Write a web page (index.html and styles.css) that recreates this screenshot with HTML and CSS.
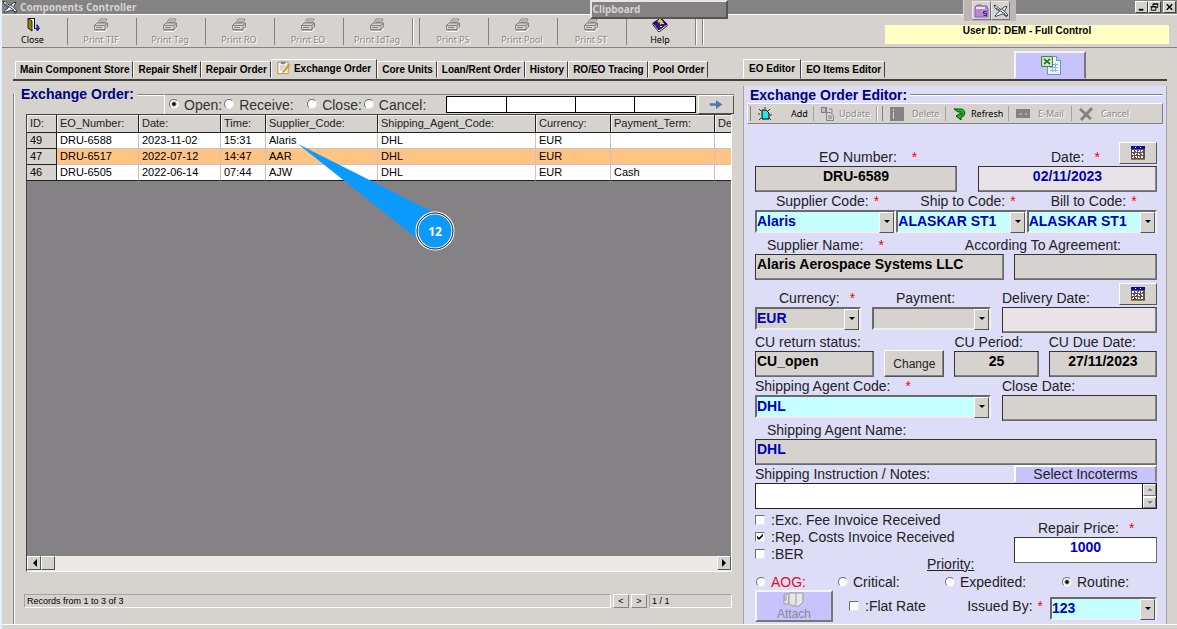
FILE: index.html
```html
<!DOCTYPE html>
<html lang="en">
<head>
<meta charset="utf-8">
<title>Components Controller</title>
<link rel="stylesheet" href="styles.css">
</head>
<body>
<svg class="defs" aria-hidden="true">
  <symbol id="i-printer" viewBox="0 0 16 14">
    <path d="M5 5 7 1h7l-2 4" fill="#e8e6e2" stroke="#848284"/>
    <path d="M7 3h5M6.500 4.500h5" stroke="#848284"/>
    <path d="M1.500 7.500 4 5h10.500l-2.500 2.500zM1.500 7.500h10.500v4H1.500zM12 7.500l2.500-2.500v4l-2.500 2.500M3 11.500v1.500h8l1-1.500" fill="#d6d3ce" stroke="#848284"/>
    <path d="M3 9.500h6" stroke="#848284"/><path d="M2 13.500h10l3-3.500" fill="none" stroke="#fff"/>
  </symbol>
  <symbol id="i-plane" viewBox="0 0 16 14">
    <path d="M1 1.500h2l3 3 2 1 4-3h2l-2.500 4.500 3 3.500v1.500l-5-2-7 2.500v-1.500l4-3.500-4-3z" fill="#eef2f6" stroke="#222" stroke-width=".8"/>
    <path d="M3 4l9 6M9 5.500l2 1M11 11l3 2" stroke="#3a4a6a" stroke-width="1"/>
  </symbol>
  <symbol id="i-calendar" viewBox="0 0 14 14">
    <path d="M0 0h14v14H0z" fill="#555"/>
    <path d="M0 0h14v3H0z" fill="#0808b8"/><path d="M4 1h1v1H4zM9 1h1v1H9z" fill="#fff"/>
    <path d="M1 4h2v2H1zM4 4h2v2H4zM7 4h2v2H7zM10 4h2v2h-2zM1 7h2v2H1zM4 7h2v2H4zM7 7h2v2H7zM10 7h2v2h-2zM1 10h2v2H1zM4 10h2v2H4zM7 10h2v2H7zM10 10h2v2h-2z" fill="#fff"/>
    <path d="M4 5h1v1H4zM7 4h1v1H7zM11 5h1v1h-1zM2 7h1v1H2zM5 8h1v1H5zM8 7h1v1H8zM10 8h1v1h-1zM1 10h1v1H1zM4 11h1v1H4zM8 10h1v1H8z" fill="#e02020"/>
    <path d="M0 13h14v1H0z" fill="#8a8430"/>
  </symbol>
</svg>

<header class="titlebar">
  <svg class="app-icon"><use href="#i-plane"/></svg>
  <h1>Components Controller</h1>
  <div class="window-buttons">
    <button type="button" aria-label="Minimize"><svg viewBox="0 0 12 10"><path d="M3 8h5" stroke="#000" stroke-width="2"/></svg></button>
    <button type="button" aria-label="Restore"><svg viewBox="0 0 12 10"><path d="M4.500 4V1.500h5v4H8M4 2h6M2.500 4.500h5v4h-5zM2 5h6" fill="none" stroke="#000"/></svg></button>
    <button type="button" aria-label="Close window" class="apart"><svg viewBox="0 0 12 10"><path d="M3 2l6 6M9 2 3 8" stroke="#000" stroke-width="1.500"/></svg></button>
  </div>
</header>
<div class="clipboard-window">Clipboard</div>
<div class="float-tools">
  <button type="button" aria-label="Folder"><svg viewBox="0 0 16 14"><path d="M1 3 3 1h4l1 1h5v2h1v9H1z" fill="#b48ad0" stroke="#8a60b0"/><path d="M2 4h9" stroke="#f0e0fa" stroke-width="2"/><path d="M12.500 7.500h-3v2h3v2h-3" fill="none" stroke="#302090"/></svg></button>
  <button type="button" aria-label="Plane"><svg><use href="#i-plane"/></svg></button>
</div>

<div class="toolbar">
  <nav class="tools">
    <button type="button" class="first"><svg viewBox="0 0 16 14"><path d="M3.500 11V.5h6V11" fill="#fff" stroke="#000"/><path d="M3 0l4 3v10L3 10z" fill="#8a8a00" stroke="#222"/><path d="M11 7c3 0 3 2 2 4M10.500 10l2 3 2-3z" fill="#2020b0" stroke="#2020b0"/></svg>Close</button>
    <button type="button" disabled><svg><use href="#i-printer"/></svg>Print TIF</button>
    <button type="button" disabled><svg><use href="#i-printer"/></svg>Print Tag</button>
    <button type="button" disabled><svg><use href="#i-printer"/></svg>Print RO</button>
    <button type="button" disabled><svg><use href="#i-printer"/></svg>Print EO</button>
    <button type="button" disabled><svg><use href="#i-printer"/></svg>Print IdTag</button>
    <span class="gap"></span>
    <button type="button" disabled><svg><use href="#i-printer"/></svg>Print PS</button>
    <button type="button" disabled><svg><use href="#i-printer"/></svg>Print Pool</button>
    <button type="button" disabled><svg><use href="#i-printer"/></svg>Print ST</button>
    <button type="button"><svg viewBox="0 0 16 14"><path d="M1 5 9 0l6 6-8 6z" fill="#2a0fa8" stroke="#100060"/><path d="M1 5v2l6 7 8-6V6l-8 6z" fill="#fff" stroke="#222"/><path d="M6 4l2-2 2 2-2 2M9 8v1M11 5v1" fill="none" stroke="#f5e020" stroke-width="2"/></svg>Help</button>
    <span class="gap"></span>
  </nav>
  <p class="user">User ID: DEM - Full Control</p>
</div>

<main class="workspace">
  <section class="orders">
    <nav class="tabs">
      <button type="button">Main Component Store</button>
      <button type="button">Repair Shelf</button>
      <button type="button">Repair Order</button>
      <button type="button" class="active"><svg viewBox="0 0 14 14"><path d="M1 1h11v12H1z" fill="#fff" stroke="#c88a30"/><path d="M4 0h5v3H4z" fill="#888"/><path d="M3 5h6M3 7h5M3 9h3" stroke="#aaa"/><path d="M6 11l6-8 2 1-6 7-2 1z" fill="#f2a52c" stroke="#b06a10" stroke-width=".5"/></svg>Exchange Order</button>
      <button type="button">Core Units</button>
      <button type="button">Loan/Rent Order</button>
      <button type="button">History</button>
      <button type="button">RO/EO Tracing</button>
      <button type="button">Pool Order</button>
    </nav>
    <div class="orders-body">
      <div class="filter-row">
        <h2>Exchange Order:</h2>
        <span class="rule"></span>
        <div class="filters">
          <label><input type="radio" name="state" checked>Open:</label>
          <label class="w-receive"><input type="radio" name="state">Receive:</label>
          <label><input type="radio" name="state">Close:</label>
          <label><input type="radio" name="state">Cancel:</label>
          <div class="search">
            <input type="text" aria-label="Filter 1"><input type="text" aria-label="Filter 2"><input type="text" aria-label="Filter 3"><input type="text" aria-label="Filter 4">
          </div>
          <button type="button" class="go" aria-label="Search"><svg viewBox="0 0 14 10"><path d="M0 3.500h7V0l7 5-7 5V6.500H0z" fill="#4a7ab0"/></svg></button>
        </div>
      </div>
      <div class="grid">
        <div class="grid-view">
          <table>
            <colgroup><col class="c-id"><col class="c-eo"><col class="c-date"><col class="c-time"><col class="c-supplier"><col class="c-agent"><col class="c-currency"><col class="c-term"><col></colgroup>
            <thead><tr><th>ID:</th><th>EO_Number:</th><th>Date:</th><th>Time:</th><th>Supplier_Code:</th><th>Shipping_Agent_Code:</th><th>Currency:</th><th>Payment_Term:</th><th>De</th></tr></thead>
            <tbody>
              <tr><th>49</th><td>DRU-6588</td><td>2023-11-02</td><td>15:31</td><td>Alaris</td><td>DHL</td><td>EUR</td><td></td><td></td></tr>
              <tr class="selected"><th>47</th><td>DRU-6517</td><td>2022-07-12</td><td>14:47</td><td>AAR</td><td>DHL</td><td>EUR</td><td></td><td></td></tr>
              <tr><th>46</th><td>DRU-6505</td><td>2022-06-14</td><td>07:44</td><td>AJW</td><td>DHL</td><td>EUR</td><td>Cash</td><td></td></tr>
            </tbody>
          </table>
        </div>
        <div class="scrollbar">
          <button type="button" aria-label="Scroll left"><svg viewBox="0 0 5 8"><path d="M5 0v8L1 4z"/></svg></button>
          <span class="thumb"></span>
          <button type="button" class="end" aria-label="Scroll right"><svg viewBox="0 0 5 8"><path d="M0 0v8l4-4z"/></svg></button>
        </div>
        <svg class="callout" viewBox="0 0 160 110"><path d="M0 0 137 69 122 97z" fill="#0c9aff"/><circle cx="137" cy="87" r="18" fill="#0c9aff" stroke="#fff" stroke-width="3"/><circle cx="137" cy="87" r="18" fill="none" stroke="#111"/><text x="137" y="92">12</text></svg>
      </div>
      <footer class="pager">
        <span class="sunken records">Records from 1 to 3 of 3</span>
        <button type="button">&lt;</button>
        <button type="button">&gt;</button>
        <span class="sunken page">1 / 1</span>
      </footer>
    </div>
  </section>

  <section class="editor">
    <nav class="tabs">
      <button type="button" class="active">EO Editor</button>
      <button type="button">EO Items Editor</button>
      <button type="button" class="excel" aria-label="Export to Excel"><svg viewBox="0 0 20 20"><path d="M6.500 1.500h9l4 4v14h-13z" fill="#f0f6ff" stroke="#6a94cc"/><path d="M15.500 1.500v4h4" fill="#c0d8f4" stroke="#6a94cc"/><path d="M9 9.500h8M9 12.500h8M9 15.500h8M11.500 8v9M14.500 8v9" stroke="#90b4e4"/><path d="M.5 1.500h11v10H.5z" fill="#c4e4b8" stroke="#3f8a3a"/><path d="M2.500 3.500h7v6h-7z" fill="#fff"/><path d="M3 4l6 5M9 4 3 9" stroke="#2c7a2a" stroke-width="2"/></svg></button>
    </nav>
    <form class="panel">
      <div class="legend"><h2>Exchange Order Editor:</h2><span class="rule"></span></div>
      <div class="actions">
        <span class="gap"></span>
        <button type="button" class="add"><svg viewBox="0 0 14 14"><path d="M4 3h4l3 3v6H4z" fill="#20e8e8" stroke="#000"/><path d="M7 0v2M1 2l2 2M12 2l-2 2M0 7h2M12 8h2M1 13l2-2M13 13l-2-2" stroke="#333"/></svg>Add</button>
        <button type="button" disabled><svg viewBox="0 0 14 14"><path d="M0 0h6v6H0z" fill="#848284"/><path d="M1 2h3M1 4h3" stroke="#fff"/><path d="M5.500 5.500h4l3 3v5h-7z" fill="#d6d3ce" stroke="#848284"/><path d="M8 2h3v4M7 9h4M7 11h4" fill="none" stroke="#848284"/></svg>Update</button>
        <span class="gap"></span>
        <button type="button" disabled class="wide"><svg viewBox="0 0 14 14"><path d="M0 0h14v14H0z" fill="#848284"/><path d="M3.500 2v2M3.500 5v7" stroke="#d6d3ce"/></svg>Delete</button>
        <button type="button" class="tight"><svg viewBox="0 0 14 14"><path d="M1 2h7c5 0 5 8 0 8v3L3 9l5-3v2c2 0 2-3 0-3H5z" fill="#18c020" stroke="#064a08"/></svg>Refresh</button>
        <button type="button" disabled class="wide"><svg viewBox="0 0 14 14"><path d="M0 2h14v9H0z" fill="#848284"/><path d="M3 7h3M9 7h2" stroke="#d6d3ce"/></svg>E-Mail</button>
        <button type="button" disabled class="wide last"><svg viewBox="0 0 14 14"><path d="M1 2l11 10M13 1 2 13" stroke="#848284" stroke-width="3"/></svg>Cancel</button>
      </div>

      <div class="fields">
        <div class="row r-number">
          <div class="field"><div class="cap in-64"><label for="eo">EO Number:</label><i class="far">*</i></div><input id="eo" class="box center" value="DRU-6589" readonly></div>
          <div class="field"><div class="cap in-73"><label for="date">Date:</label><i>*</i><button type="button" class="cal" aria-label="Pick date"><svg><use href="#i-calendar"/></svg></button></div><input id="date" class="box center blue pale" value="02/11/2023"></div>
        </div>
        <div class="row r-codes">
          <div class="field"><div class="cap in-21"><label for="sup">Supplier Code:</label><i class="near">*</i></div><div class="combo cyan"><select id="sup"><option>Alaris</option></select></div></div>
          <div class="field"><div class="cap in-24"><label for="ship">Ship to Code:</label><i class="near">*</i></div><div class="combo cyan"><select id="ship"><option>ALASKAR ST1</option></select></div></div>
          <div class="field"><div class="cap in-24"><label for="bill">Bill to Code:</label><i class="near">*</i></div><div class="combo cyan"><select id="bill"><option>ALASKAR ST1</option></select></div></div>
        </div>
        <div class="row r-name">
          <div class="field"><div class="cap in-12"><label for="sname">Supplier Name:</label><i class="far">*</i></div><input id="sname" class="box" value="Alaris Aerospace Systems LLC" readonly></div>
          <div class="field"><div class="cap to-end"><label for="agr">According To Agreement:</label></div><input id="agr" class="box" readonly></div>
        </div>
        <div class="row r-money">
          <div class="field"><div class="cap in-24"><label for="cur">Currency:</label><i>*</i></div><div class="combo blue"><select id="cur"><option>EUR</option></select></div></div>
          <div class="field"><div class="cap in-24"><label for="pay">Payment:</label></div><div class="combo"><select id="pay"><option></option></select></div></div>
          <div class="field"><div class="cap"><label for="deliv">Delivery Date:</label><button type="button" class="cal" aria-label="Pick delivery date"><svg><use href="#i-calendar"/></svg></button></div><input id="deliv" class="box pale"></div>
        </div>
        <div class="row r-return">
          <div class="field"><div class="cap"><label for="ret">CU return status:</label></div><input id="ret" class="box" value="CU_open" readonly></div>
          <button type="button" class="raised change">Change</button>
          <div class="field"><div class="cap"><label for="per">CU Period:</label></div><input id="per" class="box center" value="25" readonly></div>
          <div class="field"><div class="cap"><label for="due">CU Due Date:</label></div><input id="due" class="box center" value="27/11/2023" readonly></div>
        </div>
        <div class="row r-agent">
          <div class="field"><div class="cap"><label for="agent">Shipping Agent Code:</label><i class="far">*</i></div><div class="combo cyan"><select id="agent"><option>DHL</option></select></div></div>
          <div class="field"><div class="cap"><label for="close">Close Date:</label></div><input id="close" class="box" readonly></div>
        </div>
        <div class="row">
          <div class="field"><div class="cap in-12"><label for="aname">Shipping Agent Name:</label></div><input id="aname" class="box blue" value="DHL" readonly></div>
        </div>
        <div class="row">
          <div class="field"><div class="cap"><label for="notes">Shipping Instruction / Notes:</label><button type="button" class="incoterms">Select Incoterms</button></div>
            <div class="notes"><textarea id="notes"></textarea><div class="spin"><button type="button" aria-label="Scroll up"><svg viewBox="0 0 7 4"><path d="M0 4h7L3.500 0z"/></svg></button><button type="button" aria-label="Scroll down"><svg viewBox="0 0 7 4"><path d="M0 0h7L3.500 4z"/></svg></button></div></div></div>
        </div>
        <div class="invoice">
          <div class="checks">
            <label><input type="checkbox">:Exc. Fee Invoice Received</label>
            <label><input type="checkbox" checked>:Rep. Costs Invoice Received</label>
            <label><input type="checkbox">:BER</label>
          </div>
          <div class="field price"><div class="cap in-24"><label for="price">Repair Price:</label><i>*</i></div><input id="price" class="box center blue white" value="1000"></div>
        </div>
        <p class="priority">Priority:</p>
        <div class="levels">
          <label class="aog"><input type="radio" name="priority">AOG:</label>
          <label><input type="radio" name="priority">Critical:</label>
          <label><input type="radio" name="priority">Expedited:</label>
          <label><input type="radio" name="priority" checked>Routine:</label>
        </div>
        <div class="final">
          <button type="button" class="attach" disabled><svg viewBox="0 0 22 16"><path d="M1 2h5v10H1z" fill="#e8e6e2" stroke="#9c9aa0"/><path d="M6 1h7v10l-2 3c-3 0-5-2-5-4zM13 1h7v9l-4 4h-4" fill="#e8e6e2" stroke="#9c9aa0"/><path d="M1 4h3M1 6h3M1 8h3" stroke="#9c9aa0"/></svg>Attach</button>
          <label class="flat"><input type="checkbox">:Flat Rate</label>
          <div class="issued"><label for="by">Issued By:</label><i class="near">*</i></div>
          <div class="combo cyan"><select id="by"><option>123</option></select></div>
        </div>
      </div>
    </form>
  </section>
</main>
</body>
</html>
```

FILE: styles.css
```css
* { box-sizing: border-box; }
body {
  margin: 0;
  min-height: 100vh;
  display: flex;
  flex-direction: column;
  position: relative;
  border-left: 2px solid #e6effc;
  background: #d6d3ce;
  color: #000;
  font-family: "Liberation Sans", Arial, sans-serif;
  font-size: 14px;
}
h1, h2, p { margin: 0; }
button, input, select, textarea { font: inherit; color: inherit; margin: 0; padding: 0; border-radius: 0; min-width: 0; }
button { background: #d6d3ce; border: 0; }
svg { display: block; flex: none; }
i { font-style: normal; color: #f00; }
.defs { position: absolute; width: 0; height: 0; }

/* title bar */
.titlebar { display: flex; align-items: center; height: 14px; background: #848284; padding-right: 1px; }
.app-icon { width: 16px; height: 14px; }
h1 { margin-left: 2px; font: bold 10px/14px "Noto Sans", sans-serif; color: #d6d3ce; }
.window-buttons { display: flex; margin-left: auto; }
.window-buttons button { width: 13px; height: 12px; border: 1px solid; border-color: #fff #404040 #404040 #fff; }
.window-buttons svg { width: 11px; height: 10px; }
.window-buttons .apart { margin-left: 2px; }
.clipboard-window {
  position: absolute; left: 50%; top: 0; width: 138px; height: 19px;
  background: #848284; border: 2px solid; border-color: #e8e6e2 #555 #555 #e8e6e2;
  font: bold 10px/15px "Noto Sans", sans-serif; color: #d6d3ce; padding-left: 1px;
}
.float-tools {
  position: absolute; right: 161px; top: 0; display: flex; padding: 1px 6px 0 8px;
  height: 21px; background: #bdb4b5; border-left: 1px solid #d6d3ce;
}
.float-tools button { width: 19px; height: 19px; display: grid; place-items: center; border: 1px solid; border-color: #e8e6e2 #777 #777 #e8e6e2; }
.float-tools svg { width: 16px; height: 14px; }

/* main toolbar */
.toolbar { display: flex; height: 34px; border-top: 1px solid #fff; border-bottom: 1px solid #848284; }
.tools { display: flex; padding: 3px 0 2px; font: 9px/12px "Noto Sans", sans-serif; }
.tools button { width: 69px; display: flex; flex-direction: column; align-items: center; gap: 2px; border-right: 1px solid #848284; box-shadow: 1px 0 #fff; padding-right: 2px; }
.tools .first { width: 66px; padding-right: 4px; }
.tools svg { width: 16px; height: 14px; }
button:disabled { color: #8c8a88; text-shadow: 1px 1px #fff; }
.gap { width: 7px; border-right: 1px solid #848284; box-shadow: 1px 0 #fff; }
.user { width: 284px; height: 19px; margin: 10px 8px 0 auto; background: #ffffc6; text-align: center; font: bold 10px/12px "Liberation Sans", sans-serif; }

.workspace { flex: 1; display: grid; grid-template-columns: minmax(0, 1fr) 424px; padding: 0 10px 0 11px; margin-bottom: 4px; border-bottom: 1px solid #fff; }
.orders, .editor { display: flex; flex-direction: column; }

/* tabs */
.tabs { display: flex; align-items: flex-end; height: 33px; padding-left: 2px; border-bottom: 2px solid #424142; font-size: 10px; font-weight: bold; white-space: nowrap; }
.tabs button { height: 17px; margin-bottom: 1px; padding: 0 3px 0 4px; border: 1px solid; border-color: #fff #424142 transparent #fff; }
.tabs .active { display: flex; align-items: center; gap: 4px; height: 20px; margin-bottom: 0; padding: 0 5px 2px; }
.tabs .active svg { width: 13px; height: 14px; }
.editor .tabs { padding-left: 0; }
.tabs .excel { width: 72px; height: 28px; margin: 0 81px 0 auto; display: grid; place-items: center; background: #c6c3ff; border: 2px solid; border-color: #f4f4ff #777 transparent #f4f4ff; }
.excel svg { width: 20px; height: 20px; }

/* orders list */
.orders-body { flex: 1; display: flex; flex-direction: column; margin-top: 13px; padding: 0 11px 16px 12px; border-left: 1px solid #848284; box-shadow: inset 1px 0 #fff; }
h2 { font-size: 14px; line-height: 16px; font-weight: bold; color: #000084; white-space: nowrap; }
.rule { flex: 1; height: 2px; border-top: 1px solid #848284; border-bottom: 1px solid #fff; }
.filter-row { display: flex; height: 20px; margin-left: -5px; margin-right: -2px; }
.filter-row h2 { margin-top: -8px; }
.filter-row .rule { margin-left: 3px; }
.filters { width: 570px; display: flex; align-items: center; height: 20px; padding-left: 2px; border-top: 1px solid #848284; border-left: 1px solid #fff; }
.filters label { display: flex; align-items: center; color: #333; }
.filters .w-receive { width: 83px; }
input[type=radio], input[type=checkbox] { appearance: none; flex: none; background: #fff; width: 10px; height: 10px; border: 1px solid; border-color: #707070 #e8e8e8 #e8e8e8 #707070; }
input[type=radio] { border-radius: 50%; margin: 0 7px 0 1px; }
input[type=radio]:checked { background: radial-gradient(#000 0 1px, #fff 3px); }
.filters input[type=radio] { margin: 0 5px 2px 2px; }
.search { display: grid; grid-template-columns: 60fr 70fr 60fr 60fr; width: 250px; height: 17px; margin-left: auto; border: 1px solid #000; background: #fff; }
.search input { border: 0; border-right: 1px solid #000; background: #fff; font-size: 11px; }
.search input:last-child { border-right: 0; }
.go { display: grid; place-items: center; width: 36px; height: 19px; margin-left: 2px; border: 1px solid; border-color: #fff #555 #555 #fff; }
.go svg { width: 14px; height: 9px; }

.grid { position: relative; flex: 1; display: flex; flex-direction: column; border: 1px solid #424142; border-right-color: #fff; border-bottom-color: #fff; background: #848284; }
.grid-view { flex: 1; overflow: hidden; }
table { width: 100%; table-layout: fixed; border-collapse: separate; border-spacing: 0; font-size: 11px; line-height: 15px; }
.c-id { width: 30px; } .c-eo, .c-date { width: 82px; } .c-time { width: 45px; } .c-supplier { width: 112px; }
.c-agent { width: 158px; } .c-currency { width: 75px; } .c-term { width: 104px; }
th, td { height: 16px; padding: 0 0 0 3px; text-align: left; font-weight: normal; white-space: nowrap; overflow: hidden; border-right: 1px solid #c6c3c6; border-bottom: 1px solid #c6c3c6; background: #fff; }
thead th { height: 18px; background: #d6d3ce; border-color: #222; box-shadow: inset 1px 1px #f4f2ee; color: #222; }
tbody th { background: #d6d3ce; border-color: #222; }
tr > :last-child { border-right: 0; }
.selected td { background: #ffc384; }
tbody tr:last-child td { border-bottom-color: #222; }
.scrollbar { display: flex; height: 15px; background: #ebe9e6; }
.scrollbar button, .thumb { width: 14px; height: 14px; display: grid; place-items: center; background: #d6d3ce; border: 1px solid; border-color: #fff #555 #555 #fff; }
.scrollbar .end { margin-left: auto; }
.scrollbar svg { width: 5px; height: 8px; }
.callout { position: absolute; left: 271px; top: 29px; width: 160px; height: 110px; }
.callout text { fill: #fff; font: bold 12px "Noto Sans", sans-serif; text-anchor: middle; }

.pager { display: flex; gap: 2px; height: 14px; margin: 22px 0 0 -2px; font-size: 9px; line-height: 12px; }
.sunken { border: 1px solid; border-color: #a5a2a5 #fff #fff #a5a2a5; padding-left: 2px; }
.records { flex: 1; }
.page { width: 83px; }
.pager button { width: 16px; line-height: 11px; border: 1px solid; border-color: #fff #848284 #848284 #fff; }

/* editor */
.panel { flex: 1; margin-top: 5px; padding: 0 4px 1px 2px; background: #deddf7; box-shadow: inset 1px 0 #a5a2a5, inset -1px 0 #a5a2a5; }
.legend { display: flex; align-items: center; gap: 3px; height: 17px; padding-left: 5px; }
.actions { display: flex; height: 21px; margin-left: 2px; background: #d6d3ce; border: 1px solid; border-color: #fff #848284 #848284 #fff; padding: 2px 0; font: 9px/15px "Noto Sans", sans-serif; }
.actions .gap { width: 6px; }
.actions .gap:first-child { width: 3px; }
.actions button { width: 63px; display: flex; align-items: center; gap: 4px; padding-left: 7px; border-right: 1px solid #a5a2a5; box-shadow: 1px 0 #fff; }
.actions svg { width: 14px; height: 14px; }
.actions .add { gap: 19px; }
.actions .wide { gap: 8px; }
.actions .last { border: 0; box-shadow: none; }

.fields { padding: 24px 6px 0 10px; }
.row { display: grid; height: 44px; }
.r-number { grid-template-columns: 202fr 179fr; gap: 21px; }
.r-codes { grid-template-columns: 141fr 130fr 130fr; }
.r-name { grid-template-columns: 249fr 143fr; gap: 10px; }
.r-money { grid-template-columns: 106fr 119fr 155fr; gap: 11px; margin-top: 9px; }
.r-return { grid-template-columns: 119fr 60fr 84fr 108fr; gap: 10px; }
.r-agent { grid-template-columns: 236fr 155fr; gap: 11px; }
.field { min-width: 0; }
.cap { display: flex; align-items: flex-end; height: 18px; line-height: 17px; white-space: nowrap; color: #222; }
.cap i { margin-left: 10px; }
.cap .near, .issued .near { margin-left: 5px; }
.cap .far { margin-left: 15px; }
.in-12 { padding-left: 12px; }
.in-21 { padding-left: 21px; }
.in-24 { padding-left: 24px; }
.in-64 { padding-left: 64px; }
.in-73 { padding-left: 73px; }
.to-end { justify-content: flex-end; padding-right: 36px; }
.box { display: block; width: 100%; height: 26px; padding: 0 1px 6px; background: #d6d3ce; border: 1px solid #333; border-right-color: #6b696b; border-bottom-color: #6b696b; box-shadow: inset -1px -1px #848284; font-weight: bold; }
.center { text-align: center; }
.blue { color: #0000c6; }
.pale { background: #e7e3e7; }
.white { background: #fff; box-shadow: none; }
.combo { position: relative; height: 23px; background: #d6d3ce; border: 2px solid; border-color: #6b696b #efefef #efefef #6b696b; }
.cyan { background: #c6ffff; color: #0000c6; }
.combo select { display: block; appearance: none; width: 100%; height: 18px; border: 0; background: transparent; font-weight: bold; }
.combo::before { content: ""; position: absolute; right: 0; top: 0; width: 13px; height: 19px; background: #d6d3ce; border: 1px solid; border-color: #fff #555 #555 #fff; pointer-events: none; }
.combo::after { content: ""; position: absolute; right: 4px; top: 8px; border: 3px solid transparent; border-top-color: #000; border-bottom: 0; pointer-events: none; }
.raised { border: 1px solid; border-color: #fff #555 #555 #fff; box-shadow: inset -1px -1px #848284; }
.change { align-self: end; height: 27px; font-size: 12px; color: #222; }
.cal { display: grid; place-items: center; width: 38px; height: 22px; margin: 0 0 2px auto; border: 1px solid; border-color: #fff #555 #555 #fff; }
.cal svg { width: 14px; height: 14px; }
.incoterms { width: 143px; height: 18px; margin-left: auto; background: #c6c3ff; border: 2px solid; border-color: #fff #848284 #c6c3ff #fff; line-height: 14px; }
.notes { display: flex; height: 26px; border: 1px solid #222; background: #fff; }
.notes textarea { flex: 1; border: 0; border-right: 1px solid #222; resize: none; overflow: hidden; background: #fff; }
.spin { width: 13px; display: grid; grid-template-rows: 1fr 1fr; gap: 1px; }
.spin button { display: grid; place-items: center; border: 1px solid; border-color: #fff #777 #777 #fff; }
.spin svg { width: 6px; height: 3px; fill: #848284; }

.invoice { display: grid; grid-template-columns: 1fr 143px; height: 53px; padding-top: 2px; color: #222; }
.checks label { display: flex; align-items: center; height: 17px; white-space: nowrap; }
input[type=checkbox] { display: grid; margin: 0 6px 0 0; }
input[type=checkbox]:checked::before { content: ""; width: 8px; height: 8px; background: #000; clip-path: polygon(12% 40%, 38% 65%, 88% 12%, 88% 45%, 38% 95%, 12% 70%); }
.price { padding-top: 8px; }
.priority { margin: -6px 0 0 172px; line-height: 16px; text-decoration: underline; color: #222; }
.levels { display: grid; grid-template-columns: 82fr 107fr 117fr 96fr; height: 17px; margin-top: 1px; color: #222; }
.levels label { display: flex; align-items: center; }
.levels .aog { color: #e01020; }
.levels input { margin-right: 5px; }
.final { display: grid; grid-template-columns: 78px 1fr auto 107px; align-items: center; color: #222; }
.attach { height: 32px; display: flex; flex-direction: column; align-items: center; background: #c6c3ff; border: 2px solid; border-color: #f4f4ff #777 #777 #f4f4ff; font-size: 12px; line-height: 12px; }
.final .attach { text-shadow: none; }
.attach svg { width: 22px; height: 16px; }
.flat { display: flex; align-items: center; padding-left: 16px; }
.issued { padding-right: 7px; }
.final .combo { margin-top: 5px; }
```
